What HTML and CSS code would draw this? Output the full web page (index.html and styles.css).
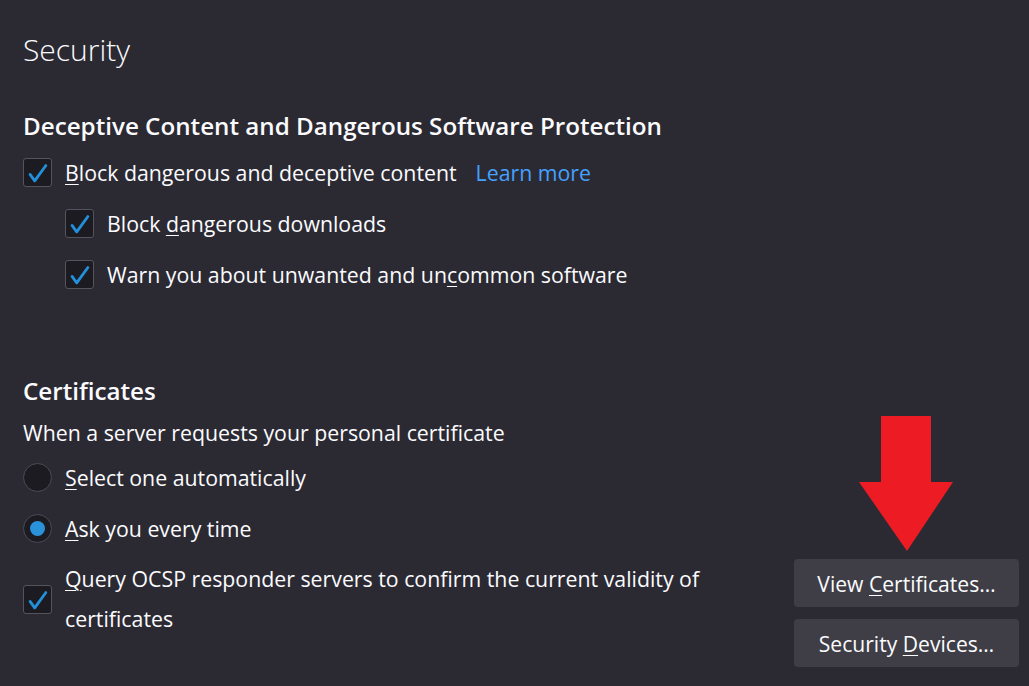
FILE: index.html
```html
<!DOCTYPE html>
<html lang="en">
<head>
<meta charset="utf-8">
<title>Security</title>
<link rel="stylesheet" href="styles.css">
</head>
<body>
<main class="page">
  <h1 class="title">Security</h1>

  <section class="group">
    <h2 class="heading">Deceptive Content and Dangerous Software Protection</h2>
    <div class="row">
      <span class="checkbox checked"><svg viewBox="0 0 29 29"><path d="M6.5 16.5 L11.5 23.5 L23.5 7"/></svg></span>
      <span class="label"><u>B</u>lock dangerous and deceptive content</span>
      <a class="link" href="#">Learn more</a>
    </div>
    <div class="row sub">
      <span class="checkbox checked"><svg viewBox="0 0 29 29"><path d="M6.5 16.5 L11.5 23.5 L23.5 7"/></svg></span>
      <span class="label">Block <u>d</u>angerous downloads</span>
    </div>
    <div class="row sub">
      <span class="checkbox checked"><svg viewBox="0 0 29 29"><path d="M6.5 16.5 L11.5 23.5 L23.5 7"/></svg></span>
      <span class="label">Warn you about unwanted and un<u>c</u>ommon software</span>
    </div>
  </section>

  <section class="group certs">
    <h2 class="heading">Certificates</h2>
    <p class="desc">When a server requests your personal certificate</p>
    <div class="row">
      <span class="radio"></span>
      <span class="label"><u>S</u>elect one automatically</span>
    </div>
    <div class="row">
      <span class="radio selected"></span>
      <span class="label"><u>A</u>sk you every time</span>
    </div>
    <div class="bottom">
      <div class="query">
        <span class="checkbox checked"><svg viewBox="0 0 29 29"><path d="M6.5 16.5 L11.5 23.5 L23.5 7"/></svg></span>
        <span class="label wrap"><u>Q</u>uery OCSP responder servers to confirm the current validity of certificates</span>
      </div>
      <div class="buttons">
        <svg class="arrow" viewBox="0 0 94 136"><path d="M22 0 H72 V66 H94 L48 135 L0 66 H22 Z"/></svg>
        <button class="btn">View <u>C</u>ertificates…</button>
        <button class="btn">Security <u>D</u>evices…</button>
      </div>
    </div>
  </section>
</main>
</body>
</html>
```

FILE: styles.css
```css
html, body {
  margin: 0;
  padding: 0;
  background: #2b2a33;
}
body {
  color: #fbfbfe;
  font-family: "Open Sans", "Noto Sans", sans-serif;
  font-size: 21.3px;
}
.page {
  padding: 30px 10px 0 23px;
}
.title {
  margin: 0;
  font-size: 30px;
  font-weight: 300;
  line-height: 40px;
}
.group {
  margin-top: 40px;
}
.heading {
  margin: 0;
  font-size: 24.2px;
  font-weight: 600;
  line-height: 32px;
  margin-bottom: 5px;
}
.row {
  display: flex;
  align-items: center;
  height: 51px;
}
.row.sub {
  margin-left: 42px;
}
.label u,
.btn u {
  text-decoration-thickness: 1px;
  text-underline-offset: 3px;
}
.checkbox {
  flex: none;
  box-sizing: border-box;
  width: 29px;
  height: 29px;
  border: 1px solid #55545e;
  border-radius: 3px;
  background: #1c1b22;
  margin-right: 13px;
  display: flex;
}
.checkbox svg {
  width: 100%;
  height: 100%;
}
.checkbox path {
  fill: none;
  stroke: #2290da;
  stroke-width: 3;
  stroke-linecap: round;
  stroke-linejoin: round;
}
.link {
  color: #45a1ff;
  text-decoration: none;
  margin-left: 19px;
}
.certs {
  margin-top: 75px;
}
.certs .heading {
  margin-bottom: 10px;
}
.desc {
  margin: 0 0 3px;
  line-height: 32px;
}
.radio {
  flex: none;
  box-sizing: border-box;
  width: 29px;
  height: 29px;
  border: 1px solid #4d4c56;
  border-radius: 50%;
  background: #1c1b22;
  margin-right: 13px;
  display: flex;
  align-items: center;
  justify-content: center;
}
.radio.selected::after {
  content: "";
  width: 15px;
  height: 15px;
  border-radius: 50%;
  background: #2a92d8;
}
.bottom {
  display: flex;
  justify-content: space-between;
  align-items: flex-start;
  margin-top: 5px;
}
.query {
  display: flex;
  align-items: center;
}
.wrap {
  width: 680px;
  line-height: 40px;
}
.buttons {
  position: relative;
  display: flex;
  flex-direction: column;
  gap: 12px;
  width: 225px;
}
.arrow {
  position: absolute;
  left: 65px;
  top: -143px;
  width: 94px;
  height: 136px;
}
.arrow path {
  fill: #ed1c24;
}
.btn {
  height: 48px;
  border: none;
  border-radius: 4px;
  background: #3f3e46;
  color: #fbfbfe;
  font-family: inherit;
  font-size: 21.1px;
  padding: 0;
}
```
